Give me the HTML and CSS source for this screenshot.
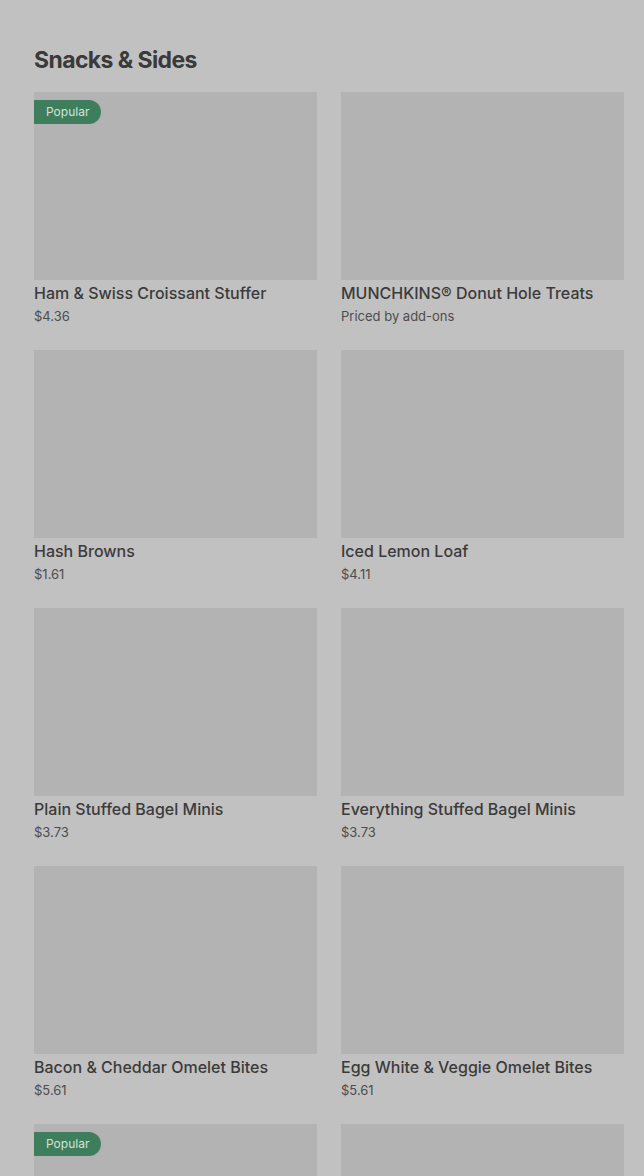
FILE: index.html
```html
<!DOCTYPE html>
<html lang="en">
<head>
  <meta charset="UTF-8">
  <meta name="viewport" content="width=device-width, initial-scale=1.0">
  <title>Snacks &amp; Sides</title>
  <link rel="stylesheet" href="styles.css">
</head>
<body>
  <section class="menu-section">
    <h2>Snacks &amp; Sides</h2>

    <div class="item-grid">
      <div class="item-card">
        <div class="item-photo"><span class="badge">Popular</span></div>
        <div class="item-name">Ham &amp; Swiss Croissant Stuffer</div>
        <div class="item-price">$4.36</div>
      </div>
      <div class="item-card">
        <div class="item-photo"></div>
        <div class="item-name">MUNCHKINS® Donut Hole Treats</div>
        <div class="item-price">Priced by add-ons</div>
      </div>

      <div class="item-card">
        <div class="item-photo"></div>
        <div class="item-name">Hash Browns</div>
        <div class="item-price">$1.61</div>
      </div>
      <div class="item-card">
        <div class="item-photo"></div>
        <div class="item-name">Iced Lemon Loaf</div>
        <div class="item-price">$4.11</div>
      </div>

      <div class="item-card">
        <div class="item-photo"></div>
        <div class="item-name">Plain Stuffed Bagel Minis</div>
        <div class="item-price">$3.73</div>
      </div>
      <div class="item-card">
        <div class="item-photo"></div>
        <div class="item-name">Everything Stuffed Bagel Minis</div>
        <div class="item-price">$3.73</div>
      </div>

      <div class="item-card">
        <div class="item-photo"></div>
        <div class="item-name">Bacon &amp; Cheddar Omelet Bites</div>
        <div class="item-price">$5.61</div>
      </div>
      <div class="item-card">
        <div class="item-photo"></div>
        <div class="item-name">Egg White &amp; Veggie Omelet Bites</div>
        <div class="item-price">$5.61</div>
      </div>

      <!-- next row, only the photos fit in the viewport -->
      <div class="item-card">
        <div class="item-photo"><span class="badge">Popular</span></div>
      </div>
      <div class="item-card">
        <div class="item-photo"></div>
      </div>
    </div>
  </section>
</body>
</html>
```

FILE: styles.css
```css
body {
  margin: 0;
  background-color: #c1c1c1;
  color: #3a3a3a;
  font-family: Inter, "Liberation Sans", sans-serif;
  height: 1176px;
  overflow: hidden;
}
.menu-section {
  padding: 44px 20px 0 34px;
}
.menu-section h2 {
  margin: 0 0 16px;
  font-size: 23px;
  line-height: 32px;
  font-weight: 700;
  letter-spacing: -0.6px;
  color: #3a3a3a;
}
.item-grid {
  display: grid;
  grid-template-columns: 283px 283px;
  column-gap: 24px;
  row-gap: 24px;
}
.item-photo {
  height: 188px;
  background-color: #b3b3b3;
  position: relative;
}
.item-photo .badge {
  position: absolute;
  top: 8px;
  left: 0;
  height: 24px;
  line-height: 24px;
  padding: 0 12px;
  background-color: #3f7e5d;
  color: #d4e2d9;
  font-size: 12px;
  border-radius: 0 12px 12px 0;
}
.item-name {
  margin-top: 3px;
  font-size: 16px;
  line-height: 20px;
  font-weight: 500;
  color: #3b3b3b;
  white-space: nowrap;
}
.item-price {
  margin-top: 3px;
  font-size: 13px;
  line-height: 20px;
  color: #4d4d4d;
}
```
